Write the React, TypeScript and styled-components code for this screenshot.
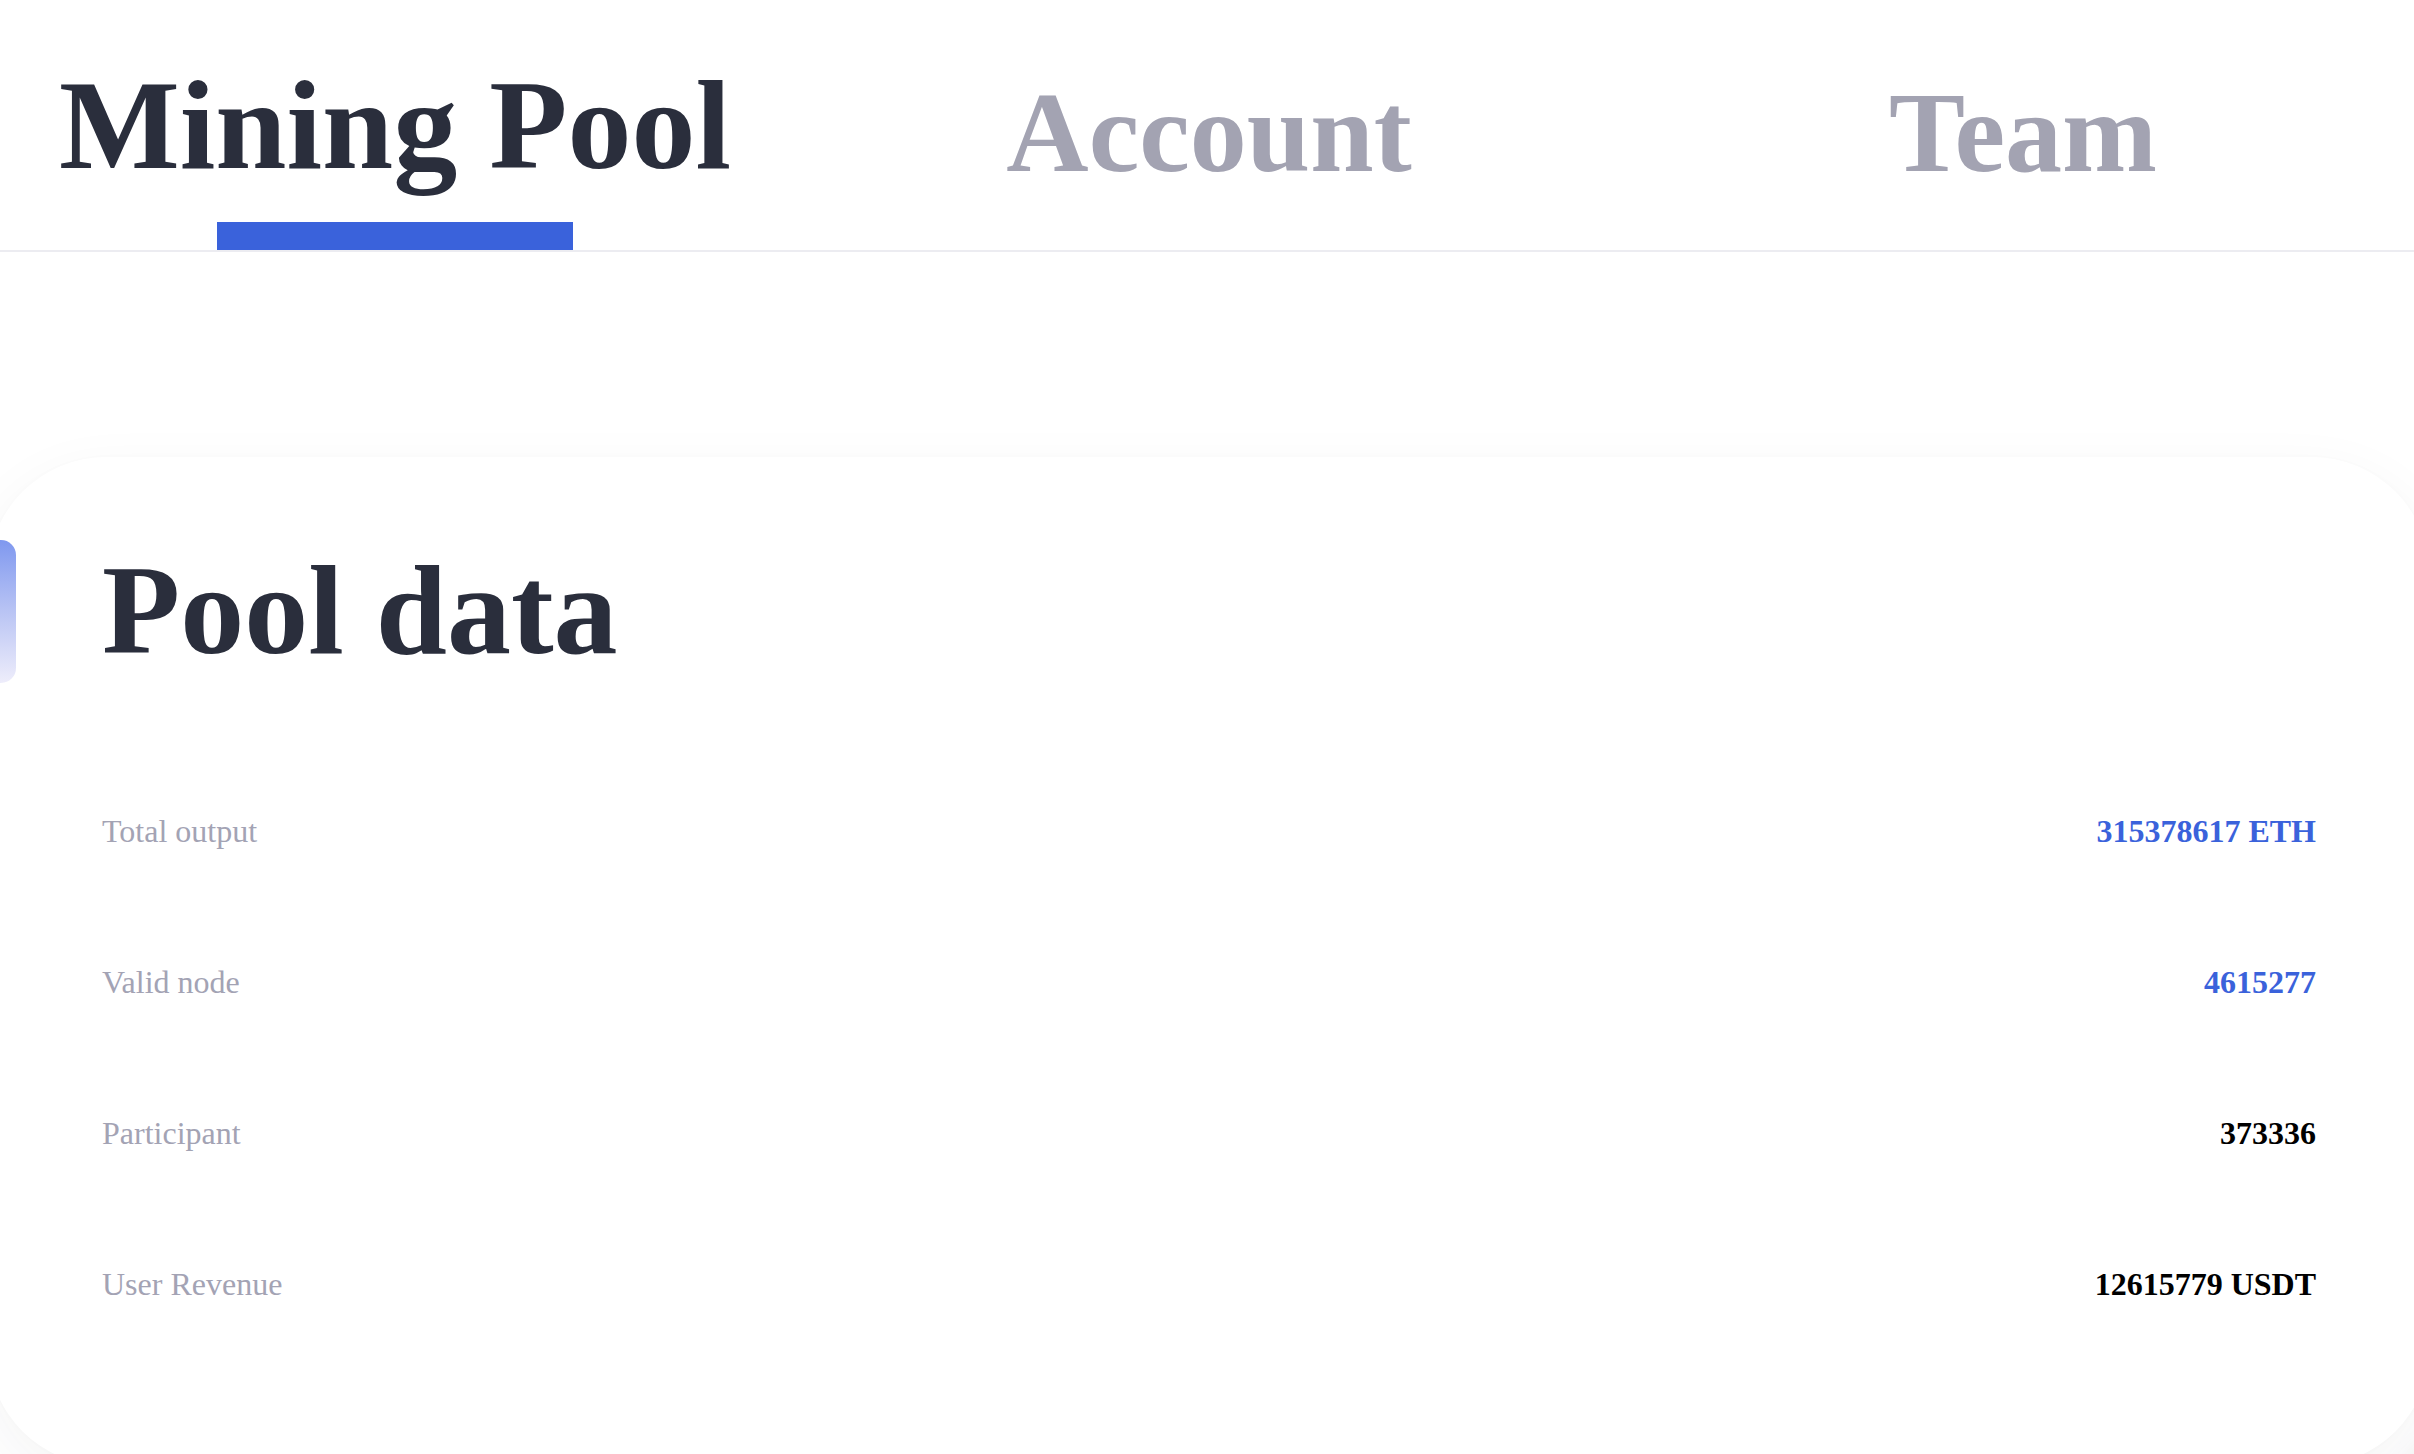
import React from "react";
import styled, { createGlobalStyle } from "styled-components";

const GlobalStyle = createGlobalStyle`
  html, body {
    margin: 0;
    padding: 0;
    background: #ffffff;
    overflow: hidden;
  }
  body {
    font-family: "Liberation Serif", "Times New Roman", Times, serif;
  }
`;

const Page = styled.div`
  width: 2442px;
  margin-left: -12px;
`;

const TabBar = styled.nav`
  display: grid;
  grid-template-columns: repeat(3, 1fr);
  padding-top: 54px;
  border-bottom: 2px solid #ececf1;
`;

const Tab = styled.div`
  display: flex;
  flex-direction: column;
  align-items: center;
  justify-content: flex-end;
  cursor: pointer;
`;

const TabLabel = styled.span<{ $active?: boolean }>`
  font-size: ${(p) => (p.$active ? 128 : 114)}px;
  line-height: ${(p) => (p.$active ? 142 : 126)}px;
  font-weight: 700;
  color: ${(p) => (p.$active ? "#2a2e3c" : "#a3a3b2")};
  white-space: nowrap;
`;

const Indicator = styled.span<{ $active?: boolean }>`
  display: block;
  margin-top: 26px;
  width: 356px;
  height: 28px;
  background: ${(p) => (p.$active ? "#3a62db" : "transparent")};
`;

const Card = styled.section`
  position: relative;
  margin-top: 205px;
  background: #ffffff;
  border-radius: 118px;
  box-shadow: 0 18px 60px rgba(30, 30, 50, 0.05), 0 0 10px rgba(30, 30, 50, 0.012);
  padding: 82px 114px 107px;
`;

const Heading = styled.h2`
  position: relative;
  margin: 0 0 74px;
  font-size: 128px;
  line-height: 142px;
  font-weight: 700;
  color: #2a2e3c;

  &::before {
    content: "";
    position: absolute;
    left: -114px;
    top: 1px;
    width: 28px;
    height: 143px;
    border-radius: 0 15px 15px 0;
    background: linear-gradient(180deg, #7f98ef 0%, #b9c4f4 50%, #eeedfb 100%);
  }
`;

const Rows = styled.div`
  display: flex;
  flex-direction: column;
`;

const Row = styled.div`
  display: flex;
  align-items: center;
  justify-content: space-between;
  height: 151px;
`;

const Label = styled.span`
  font-size: 32px;
  line-height: 36px;
  color: #a3a3b4;
`;

const Value = styled.span<{ $accent?: boolean }>`
  font-size: 32px;
  line-height: 36px;
  font-weight: 700;
  color: ${(p) => (p.$accent ? "#3a62db" : "#000000")};
`;

const FloatButton = styled.div`
  position: fixed;
  left: 2405px;
  top: 1439px;
  width: 110px;
  height: 110px;
  border-radius: 50%;
  background: #23262f;
  border: 4px solid #ffffff;
  box-shadow: 0 0 30px rgba(0, 0, 0, 0.12);
`;

const tabs = [
  { label: "Mining Pool", active: true },
  { label: "Account", active: false },
  { label: "Team", active: false },
];

const rows = [
  { label: "Total output", value: "315378617 ETH", accent: true },
  { label: "Valid node", value: "4615277", accent: true },
  { label: "Participant", value: "373336", accent: false },
  { label: "User Revenue", value: "12615779 USDT", accent: false },
];

export default function App() {
  return (
    <>
      <GlobalStyle />
      <Page>
        <TabBar>
          {tabs.map((t) => (
            <Tab key={t.label}>
              <TabLabel $active={t.active}>{t.label}</TabLabel>
              <Indicator $active={t.active} />
            </Tab>
          ))}
        </TabBar>
        <Card>
          <Heading>Pool data</Heading>
          <Rows>
            {rows.map((r) => (
              <Row key={r.label}>
                <Label>{r.label}</Label>
                <Value $accent={r.accent}>{r.value}</Value>
              </Row>
            ))}
          </Rows>
        </Card>
      </Page>
      <FloatButton />
    </>
  );
}
